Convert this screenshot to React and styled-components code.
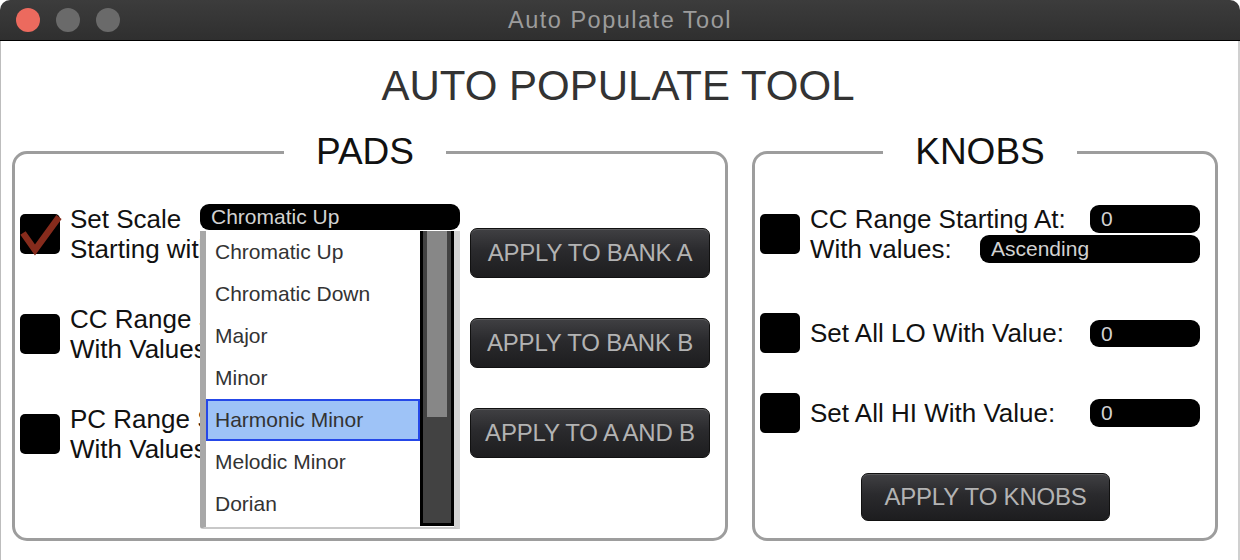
import React from 'react';
import styled, { createGlobalStyle } from 'styled-components';

const GlobalStyle = createGlobalStyle`
  html, body {
    margin: 0;
    padding: 0;
    background: #fff;
  }
  body {
    font-family: "Liberation Sans", Arial, sans-serif;
  }
`;

const Window = styled.div`
  width: 1240px;
  height: 560px;
  display: flex;
  flex-direction: column;
  overflow: hidden;
`;

const TitleBar = styled.header`
  flex: 0 0 40px;
  display: grid;
  grid-template-columns: 1fr auto 1fr;
  align-items: center;
  background: linear-gradient(#3c3c3c, #2f2f2f);
  border-bottom: 1px solid #000;
  border-radius: 10px 10px 0 0;
`;

const Lights = styled.div`
  display: flex;
  gap: 16px;
  padding-left: 16px;
`;

const Light = styled.span`
  width: 24px;
  height: 24px;
  border-radius: 50%;
  background: ${({ $color }) => $color};
`;

const WindowTitle = styled.div`
  font-size: 23.5px;
  letter-spacing: 1.5px;
  color: #9c9c9c;
`;

const Body = styled.main`
  flex: 1;
  display: flex;
  flex-direction: column;
  background: #fff;
  border-left: 1px solid #bdbdbd;
  border-right: 2px solid #d0d0d0;
  padding: 21px 20px 0 11px;
`;

const Heading = styled.h1`
  margin: 0;
  font-size: 42px;
  line-height: 48px;
  font-weight: 400;
  color: #333;
  text-align: center;
  padding-left: 6px;
`;

const Panels = styled.div`
  display: flex;
  gap: 24px;
  margin-top: 24px;
`;

const Panel = styled.fieldset`
  position: relative;
  box-sizing: border-box;
  width: ${({ $width }) => $width}px;
  height: 407px;
  min-width: 0;
  margin: 0;
  padding: 34px 15px 0 5px;
  border: 3px solid #9d9d9d;
  border-radius: 15px;
`;

const Legend = styled.legend`
  margin: 0 auto;
  padding: 0 32px;
  font-size: 37px;
  line-height: 36px;
  color: #111;
`;

const PadsLayout = styled.div`
  display: flex;
  gap: 10px;
`;

const PadRows = styled.div`
  display: flex;
  flex-direction: column;
  gap: 40px;
`;

const PadRow = styled.div`
  display: grid;
  grid-template-columns: 40px 140px 260px;
  align-items: center;
`;

const CheckBox = styled.div`
  position: relative;
  width: 40px;
  height: 40px;
  border-radius: 5px;
  background: #000;
`;

const CheckMark = styled.svg`
  position: absolute;
  left: 0;
  top: 0;
  overflow: visible;
`;

const Label = styled.div`
  font-size: 26px;
  line-height: 30px;
  color: #111;
  white-space: nowrap;
`;

const PadLabel = styled(Label)`
  padding-left: 10px;
  overflow: hidden;
`;

const Controls = styled.div`
  position: relative;
  align-self: start;
  display: flex;
  flex-direction: column;
  gap: 4px;
`;

const Combo = styled.div`
  box-sizing: border-box;
  width: ${({ $width }) => ($width ? `${$width}px` : 'auto')};
  height: ${({ $height }) => $height || 26}px;
  padding-left: 11px;
  border-radius: 9px;
  background: #000;
  color: #d2d2d2;
  font-size: 21px;
  line-height: ${({ $height }) => $height || 26}px;
  white-space: nowrap;
  overflow: hidden;
`;

const DropList = styled.div`
  position: absolute;
  top: 27px;
  left: 0;
  z-index: 5;
  box-sizing: border-box;
  width: 260px;
  height: 298px;
  display: flex;
  background: #fff;
  border-left: 6px solid #a8a8a8;
  border-right: 6px solid rgba(175, 175, 175, 0.55);
  border-bottom: 2px solid #c8c8c8;
  border-bottom-left-radius: 3px;
`;

const Items = styled.div`
  flex: 1;
`;

const Item = styled.div`
  box-sizing: border-box;
  height: 42px;
  display: flex;
  align-items: center;
  padding-left: 7px;
  border: 2px solid ${({ $selected }) => ($selected ? '#2548e8' : 'transparent')};
  background: ${({ $selected }) => ($selected ? '#9ec3f7' : 'transparent')};
  font-size: 21px;
  color: #333;
`;

const ScrollTrack = styled.div`
  box-sizing: border-box;
  width: 34px;
  height: 295px;
  padding: 0 4px;
  border: 3px solid #000;
  border-top: 0;
  background: #424242;
`;

const ScrollThumb = styled.div`
  height: 186px;
  background: #878787;
`;

const Buttons = styled.div`
  display: flex;
  flex-direction: column;
  gap: 40px;
  padding-top: 24px;
`;

const Button = styled.button`
  box-sizing: border-box;
  width: ${({ $width }) => $width || 240}px;
  height: ${({ $height }) => $height || 50}px;
  padding: 0;
  border: 1px solid #111;
  border-radius: 7px;
  background: linear-gradient(#404043, #2a2a2d 45%, #1d1d1f);
  box-shadow: inset 0 1px 0 rgba(255, 255, 255, 0.14);
  color: #b3b3b3;
  font-family: "Liberation Sans", Arial, sans-serif;
  font-size: 24px;
  letter-spacing: -0.2px;
  align-self: ${({ $center }) => ($center ? 'center' : 'auto')};
  margin-top: ${({ $mt }) => $mt || 0}px;
  margin-left: ${({ $ml }) => $ml || 0}px;
`;

const KnobLayout = styled.div`
  display: flex;
  flex-direction: column;
`;

const KnobRow = styled.div`
  display: grid;
  grid-template-columns: 40px 1fr;
  column-gap: 10px;
  align-items: center;
  margin-top: ${({ $mt }) => $mt || 0}px;
`;

const Lines = styled.div`
  display: flex;
  flex-direction: column;
`;

const Line = styled.div`
  height: 30px;
  display: flex;
  align-items: center;
  justify-content: space-between;
`;

const scales = [
  'Chromatic Up',
  'Chromatic Down',
  'Major',
  'Minor',
  'Harmonic Minor',
  'Melodic Minor',
  'Dorian',
];

const Check = ({ checked }) => (
  <CheckBox>
    {checked ? (
      <CheckMark width="40" height="40" viewBox="0 0 40 40">
        <polyline points="3,19 15,36 39,3" fill="none" stroke="#862b1c" strokeWidth="6.5" />
      </CheckMark>
    ) : null}
  </CheckBox>
);

const App = () => (
  <Window>
    <GlobalStyle />
    <TitleBar>
      <Lights>
        <Light $color="#ec6a5e" />
        <Light $color="#6a6a6a" />
        <Light $color="#6a6a6a" />
      </Lights>
      <WindowTitle>Auto Populate Tool</WindowTitle>
      <div />
    </TitleBar>
    <Body>
      <Heading>AUTO POPULATE TOOL</Heading>
      <Panels>
        <Panel $width={716}>
          <Legend>PADS</Legend>
          <PadsLayout>
            <PadRows>
              <PadRow>
                <Check checked />
                <PadLabel>
                  Set Scale
                  <br />
                  Starting with
                </PadLabel>
                <Controls>
                  <Combo>Chromatic Up</Combo>
                  <DropList>
                    <Items>
                      {scales.map((s) => (
                        <Item key={s} $selected={s === 'Harmonic Minor'}>
                          {s}
                        </Item>
                      ))}
                    </Items>
                    <ScrollTrack>
                      <ScrollThumb />
                    </ScrollTrack>
                  </DropList>
                </Controls>
              </PadRow>
              <PadRow>
                <Check />
                <PadLabel>
                  CC Range Starting At:
                  <br />
                  With Values:
                </PadLabel>
                <Controls>
                  <Combo />
                  <Combo />
                </Controls>
              </PadRow>
              <PadRow>
                <Check />
                <PadLabel>
                  PC Range Starting At:
                  <br />
                  With Values:
                </PadLabel>
                <Controls>
                  <Combo />
                  <Combo />
                </Controls>
              </PadRow>
            </PadRows>
            <Buttons>
              <Button>APPLY TO BANK A</Button>
              <Button>APPLY TO BANK B</Button>
              <Button>APPLY TO A AND B</Button>
            </Buttons>
          </PadsLayout>
        </Panel>
        <Panel $width={466}>
          <Legend>KNOBS</Legend>
          <KnobLayout>
            <KnobRow>
              <Check />
              <Lines>
                <Line>
                  <Label>CC Range Starting At:</Label>
                  <Combo $width={110} $height={28}>0</Combo>
                </Line>
                <Line>
                  <Label>With values:</Label>
                  <Combo $width={220} $height={28}>Ascending</Combo>
                </Line>
              </Lines>
            </KnobRow>
            <KnobRow $mt={49}>
              <Check />
              <Line>
                <Label>Set All LO With Value:</Label>
                <Combo $width={110} $height={27}>0</Combo>
              </Line>
            </KnobRow>
            <KnobRow $mt={40}>
              <Check />
              <Line>
                <Label>Set All HI With Value:</Label>
                <Combo $width={110} $height={28}>0</Combo>
              </Line>
            </KnobRow>
            <Button $width={249} $height={48} $center $mt={40} $ml={11}>
              APPLY TO KNOBS
            </Button>
          </KnobLayout>
        </Panel>
      </Panels>
    </Body>
  </Window>
);

export default App;
